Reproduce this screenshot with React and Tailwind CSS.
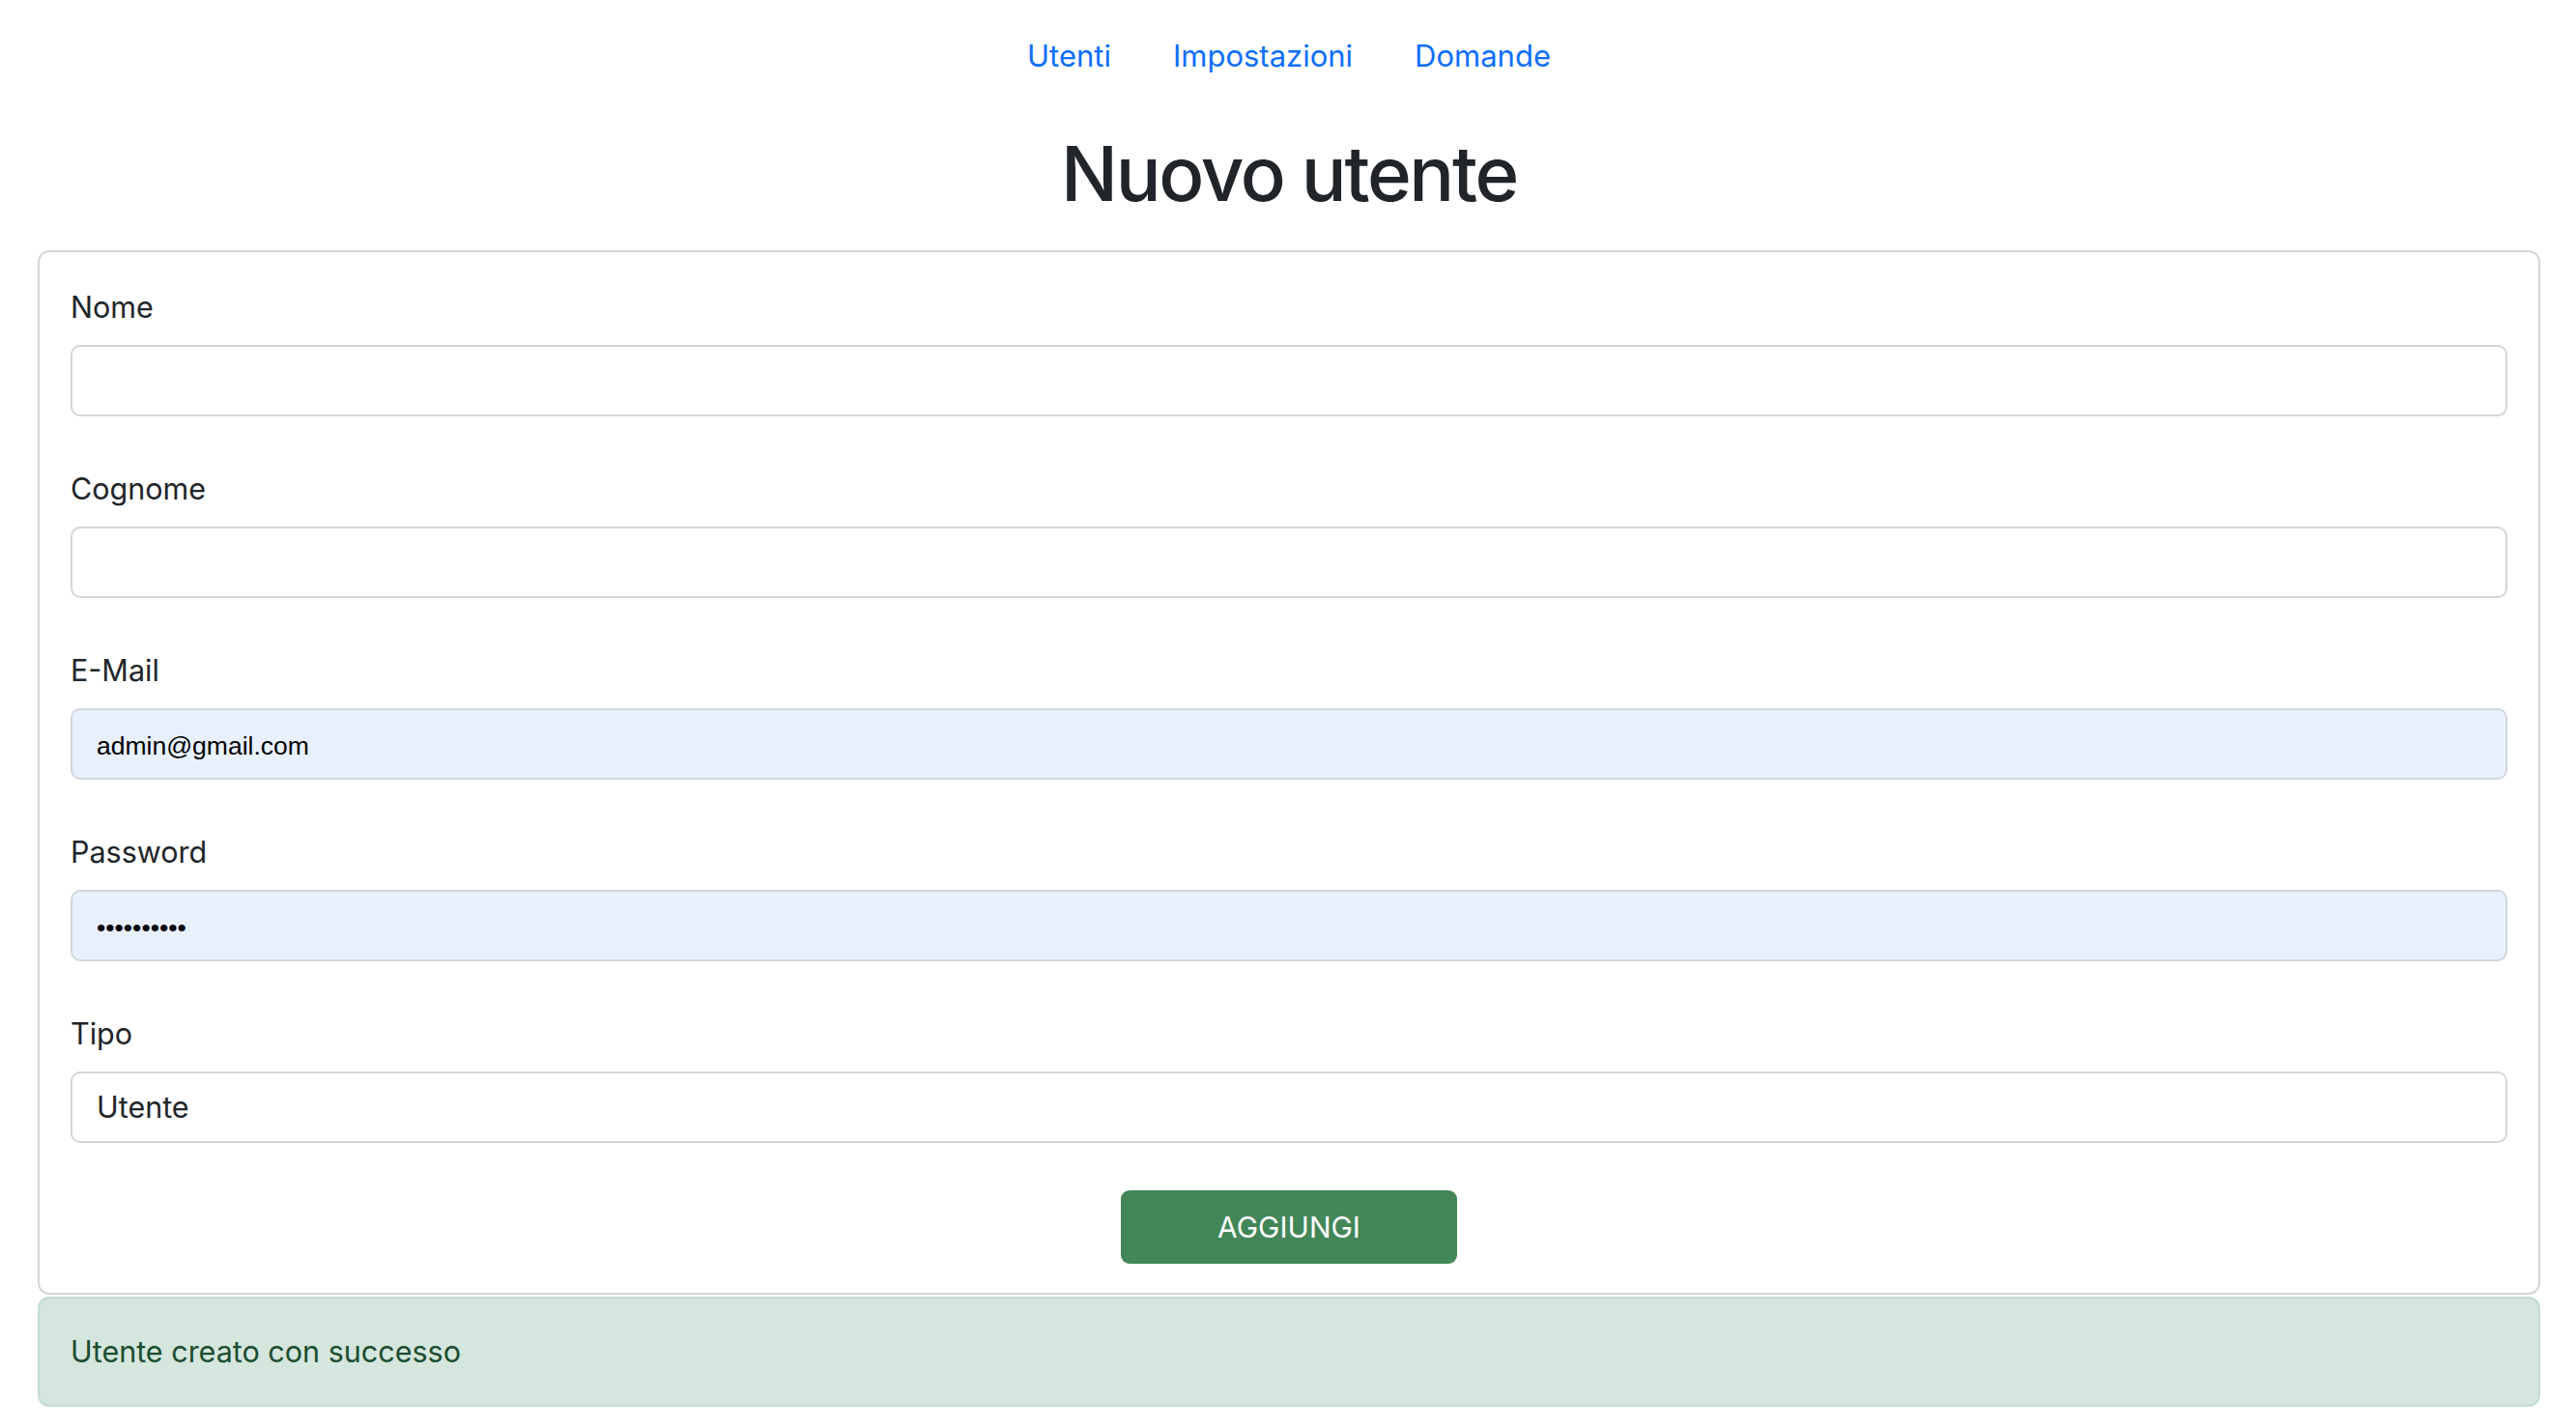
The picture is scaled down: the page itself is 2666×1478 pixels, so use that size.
const fields = [
  { label: 'Nome', type: 'text', value: '' },
  { label: 'Cognome', type: 'text', value: '' },
  { label: 'E-Mail', type: 'email', value: 'admin@gmail.com', autofill: true },
  { label: 'Password', type: 'password', value: '1234567890', autofill: true },
];

function Field({ label, type, value, autofill }) {
  return (
    <div className="mb-[52px]">
      <label className="block text-[30.5px] leading-[45px] text-[#212529] mb-[17px]">{label}</label>
      <input
        type={type}
        defaultValue={value}
        readOnly
        className={`block w-full h-[74px] px-[25px] pt-[4px] rounded-[10px] border-2 border-[#d3d6da] outline-none text-black text-[26.5px] ${
          autofill ? 'bg-[#e8f0fe]' : 'bg-white'
        }`}
        style={{ fontFamily: '"Liberation Sans", Arial, sans-serif' }}
      />
    </div>
  );
}

export default function App() {
  return (
    <div className="min-h-screen bg-white font-['Inter',sans-serif] pl-[39px] pr-[37px]">
      <nav className="flex justify-center gap-[64px] pt-[35px] text-[31px] leading-[46px]">
        <a href="#" className="text-[#0d6efd]">Utenti</a>
        <a href="#" className="text-[#0d6efd]">Impostazioni</a>
        <a href="#" className="text-[#0d6efd]">Domande</a>
      </nav>

      <h1 className="mt-[52px] text-center text-[78px] leading-[94px] font-medium tracking-[-0.03em] text-[#212529]">
        Nuovo utente
      </h1>

      <div className="mt-[32px] border-2 border-[#d3d6da] rounded-[12px] px-[32px] pt-[34px] pb-[30px]">
        {fields.map((f) => (
          <Field key={f.label} {...f} />
        ))}

        <div>
          <label className="block text-[30.5px] leading-[45px] text-[#212529] mb-[17px]">Tipo</label>
          <select
            defaultValue="Utente"
            className="block w-full h-[74px] px-[25px] rounded-[10px] border-2 border-[#d3d6da] bg-white appearance-none outline-none text-[30.5px] text-[#212529] font-['Inter',sans-serif]"
          >
            <option>Utente</option>
            <option>Admin</option>
          </select>
        </div>

        <div className="flex justify-center mt-[49px]">
          <button className="w-[348px] h-[76px] rounded-[9px] bg-[#438759] text-white text-[30px] leading-none">
            AGGIUNGI
          </button>
        </div>
      </div>

      <div className="mt-[2px] rounded-[12px] border-2 border-[#c3ddd1] bg-[#d4e6dd] px-[32px] py-[32px] text-[30.5px] leading-[46px] text-[#1b4d30]">
        Utente creato con successo
      </div>
    </div>
  );
}
